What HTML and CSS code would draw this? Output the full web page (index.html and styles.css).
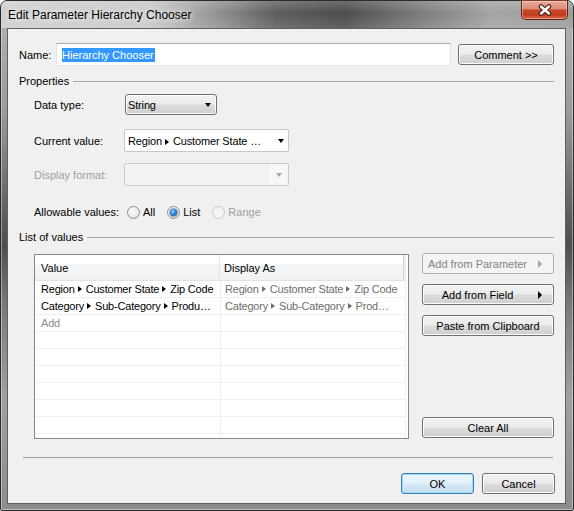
FILE: index.html
```html
<!DOCTYPE html>
<html>
<head>
<meta charset="utf-8">
<title>Edit Parameter Hierarchy Chooser</title>
<link rel="stylesheet" href="styles.css">
</head>
<body>
<div class="window">
  <div class="titlebar">
    <span class="title">Edit Parameter Hierarchy Chooser</span>
    <div class="close">
      <svg width="14" height="12" viewBox="0 0 14 12">
        <path d="M3 2.5 L11 9.5 M11 2.5 L3 9.5" stroke="#4b1d14" stroke-width="4.6" stroke-linecap="round" fill="none"/>
        <path d="M3 2.5 L11 9.5 M11 2.5 L3 9.5" stroke="#ffffff" stroke-width="2.4" stroke-linecap="round" fill="none"/>
      </svg>
    </div>
  </div>
  <div class="client">
    <div class="name-row">
      <span class="name-label">Name:</span>
      <div class="textbox"><span class="sel">Hierarchy Chooser</span></div>
      <div class="btn comment">Comment &gt;&gt;</div>
    </div>

    <div class="legend legend-props"><span>Properties</span><i></i></div>
    <div class="group">
      <div class="field f-type">
        <span class="flabel">Data type:</span>
        <div class="combo combo-btn"><span class="ctext">String</span><b class="arrow"></b></div>
      </div>
      <div class="field f-cur">
        <span class="flabel">Current value:</span>
        <div class="combo combo-edit"><span class="ctext">Region<i class="tri"></i>Customer State …</span><b class="arrow"></b></div>
      </div>
      <div class="field f-fmt">
        <span class="flabel disabled-text">Display format:</span>
        <div class="combo combo-dis"><span class="ctext"></span><span class="dbtn"><b class="arrow arrow-dis"></b></span></div>
      </div>
      <div class="field f-allow">
        <span class="flabel">Allowable values:</span>
        <span class="radio"><span class="rc"></span>All</span>
        <span class="radio"><span class="rc checked"></span>List</span>
        <span class="radio disabled-text"><span class="rc rc-dis"></span>Range</span>
      </div>
    </div>

    <div class="legend legend-list"><span>List of values</span><i></i></div>
    <div class="list-area">
      <div class="table">
        <div class="thead">
          <div class="hc c1">Value</div>
          <div class="hc c2">Display As</div>
        </div>
        <div class="row">
          <div class="cell c1">Region<i class="tri"></i>Customer State<i class="tri"></i>Zip Code</div>
          <div class="cell c2 grey">Region<i class="tri"></i>Customer State<i class="tri"></i>Zip Code</div>
        </div>
        <div class="row">
          <div class="cell c1">Category<i class="tri"></i>Sub-Category<i class="tri"></i>Produ…</div>
          <div class="cell c2 grey">Category<i class="tri"></i>Sub-Category<i class="tri"></i>Prod…</div>
        </div>
        <div class="row">
          <div class="cell c1 add">Add</div>
          <div class="cell c2"></div>
        </div>
        <div class="row"><div class="cell c1"></div><div class="cell c2"></div></div>
        <div class="row"><div class="cell c1"></div><div class="cell c2"></div></div>
        <div class="row"><div class="cell c1"></div><div class="cell c2"></div></div>
        <div class="row"><div class="cell c1"></div><div class="cell c2"></div></div>
        <div class="row"><div class="cell c1"></div><div class="cell c2"></div></div>
        <div class="row"><div class="cell c1"></div><div class="cell c2"></div></div>
        <div class="row"><div class="cell c1"></div><div class="cell c2"></div></div>
      </div>
      <div class="btn-col">
        <div class="btn btn-arrow btn-dis"><span class="btext">Add from Parameter</span><i class="rtri"></i></div>
        <div class="btn btn-arrow"><span class="btext">Add from Field</span><i class="rtri"></i></div>
        <div class="btn">Paste from Clipboard</div>
        <div class="btn clear">Clear All</div>
      </div>
    </div>

    <div class="separator"></div>
    <div class="footer">
      <div class="btn ok">OK</div>
      <div class="btn cancel">Cancel</div>
    </div>
  </div>
</div>
</body>
</html>
```

FILE: styles.css
```css
* { box-sizing: border-box; }
html, body { margin: 0; padding: 0; background: #ffffff; }
body {
  font-family: "Liberation Sans", Arial, sans-serif;
  font-size: 11px;
  color: #000;
}

.window {
  width: 574px;
  height: 511px;
  border: 1px solid #2c2c2c;
  border-radius: 7px 7px 2px 2px;
  background: linear-gradient(to bottom, #b4b4b4 0%, #9a9a9a 22%, #6a6a6a 38%, #4e4e4e 48%, #7a7a7a 60%, #a0a0a0 78%, #8c8c8c 100%);
  box-shadow: inset 0 0 0 1px rgba(255,255,255,0.4);
  display: flex;
  flex-direction: column;
}

.titlebar {
  flex: none;
  height: 27px;
  display: flex;
  align-items: flex-start;
  border-radius: 6px 6px 0 0;
  background:
    linear-gradient(to bottom, rgba(255,255,255,0.18) 0%, rgba(255,255,255,0) 45%, rgba(255,255,255,0.12) 100%),
    linear-gradient(to right, #cfcfcf 0%, #c9c9c9 26%, #9a9a9a 36%, #5e5e5e 48%, #4c4c4c 60%, #7e7e7e 74%, #a4a4a4 86%, #9c9c9c 100%);
}
.title {
  font-size: 12px;
  line-height: 28px;
  padding-left: 7px;
  color: #000;
  text-shadow: 0 0 6px rgba(255,255,255,0.9), 0 0 10px rgba(255,255,255,0.7);
}
.close {
  margin-left: auto;
  margin-right: 5px;
  margin-top: -1px;
  width: 47px;
  height: 20px;
  border: 1px solid #5e261b;
  border-top-color: #7a3a2d;
  border-radius: 0 0 5px 5px;
  background: linear-gradient(to bottom, #e9ab9c 0%, #dc8d79 42%, #c84a2b 50%, #c23c1c 78%, #dc6e4b 100%);
  box-shadow: inset 0 0 0 1px rgba(255,255,255,0.35);
  display: flex;
  align-items: center;
  justify-content: center;
}
.close svg { display: block; }

.client {
  flex: 1;
  margin: 0 7px 6px 6px;
  border: 1px solid #5c6066;
  background: #f0f0f0;
  padding: 14px 11px 9px 11px;
  display: flex;
  flex-direction: column;
}

/* name row */
.name-row {
  display: flex;
  align-items: center;
  height: 23px;
}
.name-label { width: 37px; }
.textbox {
  flex: 1;
  height: 23px;
  background: #fff;
  border: 1px solid;
  border-color: #abadb3 #dbdfe6 #e3e9ef #e2e3ea;
  padding-left: 5px;
  display: flex;
  align-items: center;
}
.sel {
  background: #3399ff;
  color: #fff;
  line-height: 14px;
  padding-right: 1px;
}
.comment {
  width: 96px;
  margin-left: 7px;
}

/* buttons */
.btn {
  height: 21px;
  border: 1px solid #707070;
  border-radius: 3px;
  background: linear-gradient(to bottom, #f2f2f2 0%, #ebebeb 48%, #dddddd 52%, #cfcfcf 100%);
  box-shadow: inset 0 0 0 1px #fcfcfc;
  display: flex;
  align-items: center;
  justify-content: center;
  white-space: nowrap;
  flex: none;
}
.btn-arrow { justify-content: flex-start; padding-left: 0; }
.btext { flex: 1; text-align: center; }
.rtri {
  width: 0; height: 0;
  border-left: 4px solid #000;
  border-top: 4px solid transparent;
  border-bottom: 4px solid transparent;
  margin: 0 11px 0 6px;
}
.btn-dis {
  border-color: #adb2b5;
  background: #f4f4f4;
  box-shadow: none;
  color: #838383;
}
.btn-dis .rtri { border-left-color: #a6a6a6; }

/* legends */
.legend {
  display: flex;
  align-items: center;
  height: 14px;
}
.legend i {
  flex: 1;
  height: 1px;
  margin-left: 4px;
  margin-top: 1px;
  background: #a8a8a8;
}
.legend-props { margin-top: 8px; }
.legend-list { margin-top: 10px; }

.group { padding-left: 15px; }
.field { display: flex; align-items: center; }
.flabel { width: 90px; flex: none; }
.disabled-text { color: #a0a0a0; }

.f-type { margin-top: 6px; height: 21px; }
.f-cur { margin-top: 14px; height: 23px; }
.f-fmt { margin-top: 11px; height: 23px; }
.f-allow { margin-top: 18px; height: 16px; }

.combo {
  display: flex;
  align-items: center;
  white-space: nowrap;
}
.ctext { flex: 1; overflow: hidden; letter-spacing: -0.15px; }
.arrow {
  width: 0; height: 0;
  border-top: 4px solid #000;
  border-left: 3.5px solid transparent;
  border-right: 3.5px solid transparent;
}
.combo-btn {
  width: 92px;
  height: 21px;
  margin-left: 1px;
  border: 1px solid #707070;
  border-radius: 3px;
  background: linear-gradient(to bottom, #f2f2f2 0%, #ebebeb 48%, #dddddd 52%, #cfcfcf 100%);
  box-shadow: inset 0 0 0 1px #fcfcfc;
  padding-left: 2px;
}
.combo-btn .arrow { margin-right: 5px; }
.combo-edit {
  width: 165px;
  height: 23px;
  border: 1px solid #c5c8cc;
  border-radius: 2px;
  background: #fff;
  padding-left: 3px;
}
.combo-edit .arrow { margin-right: 4px; }
.combo-dis {
  width: 165px;
  height: 23px;
  border: 1px solid #c8cbcf;
  border-radius: 2px;
  background: #f4f4f4;
  padding: 1px;
}
.combo-dis .ctext { height: 100%; background: #f2f2f2; }
.dbtn {
  width: 17px;
  height: 100%;
  border-left: 1px solid #ffffff;
  background: #f6f6f6;
  display: flex;
  align-items: center;
  justify-content: center;
}
.arrow-dis { border-top-color: #a8a8a8; }

/* radios */
.radio {
  display: inline-flex;
  align-items: center;
  margin-right: 12px;
}
.f-allow .radio:nth-child(2) { margin-left: 3px; }
.rc {
  width: 13px;
  height: 13px;
  border-radius: 50%;
  border: 1px solid #8e8f8f;
  background: radial-gradient(circle at 40% 35%, #ffffff 0%, #ececec 55%, #d2d2d2 100%);
  margin-right: 3px;
  position: relative;
  flex: none;
}
.rc.checked::after {
  content: "";
  position: absolute;
  left: 2px; top: 2px;
  width: 7px; height: 7px;
  border-radius: 50%;
  background: radial-gradient(circle at 40% 35%, #8fdcfb 0%, #2a86d6 45%, #0b4a98 100%);
  box-shadow: 0 0 0 0.5px #1d3f6e;
}
.rc-dis {
  border-color: #c9c9c9;
  background: #f4f4f4;
}

/* list */
.list-area {
  margin-top: 10px;
  height: 185px;
  padding-left: 15px;
  display: flex;
  gap: 13px;
}
.table {
  width: 375px;
  height: 185px;
  border: 1px solid #828790;
  background: #fff;
  overflow: hidden;
  padding-right: 2px;
}
.thead {
  display: flex;
  height: 26px;
  border-bottom: 1px solid #e2e2e2;
  background: linear-gradient(to bottom, #ffffff 0%, #ffffff 36%, #f5f6f7 38%, #f1f2f4 100%);
}
.hc {
  display: flex;
  align-items: center;
  white-space: nowrap;
}
.thead .c1 { width: 185px; padding-left: 6px; border-right: 1px solid #e3e4e6; }
.thead .c2 { width: 184px; padding-left: 4px; border-right: 1px solid #d5d6d8; box-shadow: 2px 0 0 #eeeeee; }
.row {
  display: flex;
  height: 17px;
  border-bottom: 1px solid #efefef;
}
.cell {
  display: flex;
  align-items: center;
  white-space: nowrap;
  overflow: hidden;
  letter-spacing: -0.2px;
}
.row .c1 { width: 186px; padding-left: 6px; border-right: 1px solid #efefef; }
.row .c2 { width: 185px; padding-left: 4px; border-right: 1px solid #efefef; }
.grey { color: #6d6d6d; }
.add { color: #8d8d8d; }

.tri {
  display: inline-block;
  width: 0; height: 0;
  border-left: 4px solid currentColor;
  border-top: 3.5px solid transparent;
  border-bottom: 3.5px solid transparent;
  margin: 0 4px 0 3px;
  vertical-align: baseline;
}

.btn-col {
  width: 132px;
  margin-top: -1px;
  height: 185px;
  display: flex;
  flex-direction: column;
  gap: 10px;
}
.clear { margin-top: auto; }

.separator {
  margin-top: 18px;
  margin-left: 4px;
  margin-right: 1px;
  border-top: 1px solid #a0a0a0;
  height: 0;
}
.footer {
  margin-top: 15px;
  margin-right: -1px;
  display: flex;
  justify-content: flex-end;
  gap: 8px;
}
.ok, .cancel { width: 73px; }
.ok {
  border-color: #3c7fb1;
  box-shadow: inset 0 0 0 1px #9fdaf6;
  background: linear-gradient(to bottom, #eaf6fd 0%, #e3f1fa 48%, #d4e8f5 52%, #c8def0 100%);
}
```
